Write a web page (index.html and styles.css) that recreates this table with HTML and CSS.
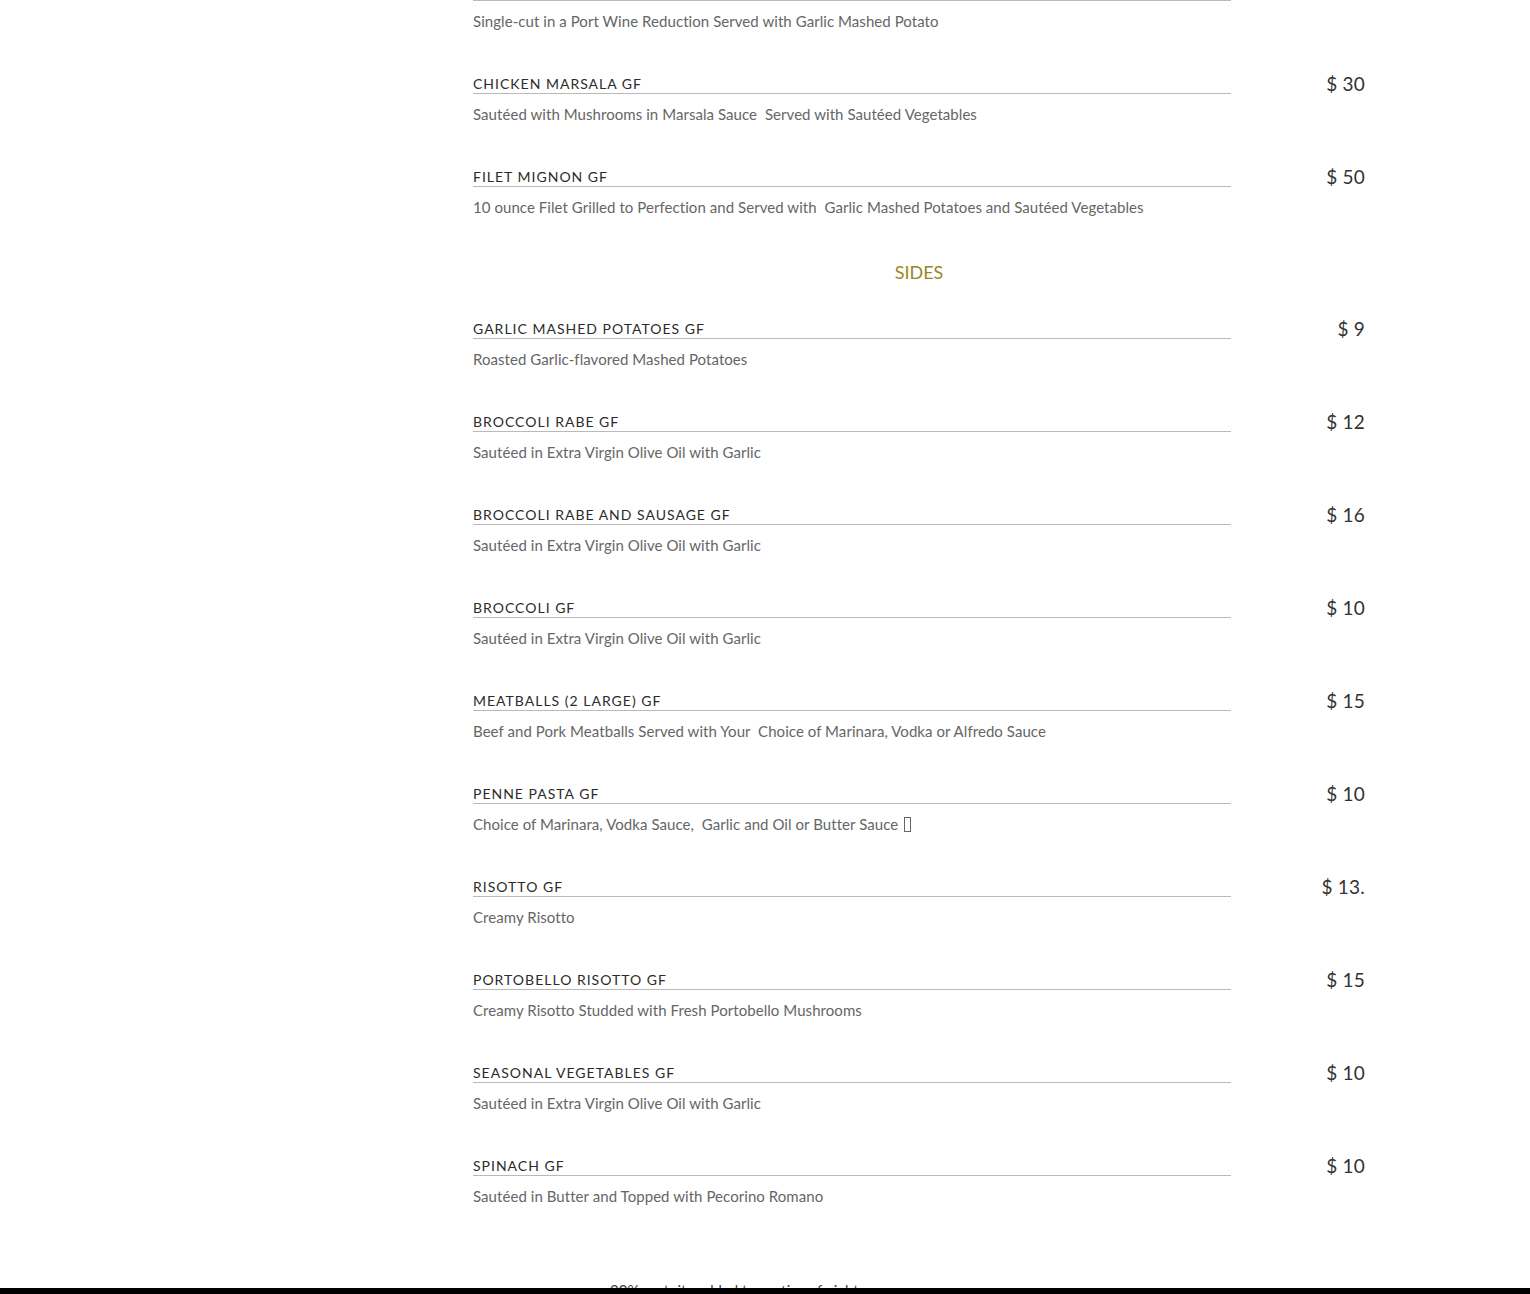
FILE: index.html
```html
<!DOCTYPE html>
<html lang="en">
<head>
<meta charset="utf-8">
<title>Menu</title>
<link rel="stylesheet" href="styles.css">
</head>
<body>
<main class="menu">
  <section class="item">
    <div class="item-head"><h3 class="item-title">VEAL CHOP GF</h3><span class="item-price">$ 45</span></div>
    <p class="item-desc">Single-cut in a Port Wine Reduction Served with Garlic Mashed Potato</p>
  </section>
  <section class="item">
    <div class="item-head"><h3 class="item-title">CHICKEN MARSALA GF</h3><span class="item-price">$ 30</span></div>
    <p class="item-desc">Sautéed with Mushrooms in Marsala Sauce&nbsp; Served with Sautéed Vegetables</p>
  </section>
  <section class="item">
    <div class="item-head"><h3 class="item-title">FILET MIGNON GF</h3><span class="item-price">$ 50</span></div>
    <p class="item-desc">10 ounce Filet Grilled to Perfection and Served with&nbsp; Garlic Mashed Potatoes and Sautéed Vegetables</p>
  </section>

  <h2 class="section-title">SIDES</h2>

  <section class="item">
    <div class="item-head"><h3 class="item-title">GARLIC MASHED POTATOES GF</h3><span class="item-price">$ 9</span></div>
    <p class="item-desc">Roasted Garlic-flavored Mashed Potatoes</p>
  </section>
  <section class="item">
    <div class="item-head"><h3 class="item-title">BROCCOLI RABE GF</h3><span class="item-price">$ 12</span></div>
    <p class="item-desc">Sautéed in Extra Virgin Olive Oil with Garlic</p>
  </section>
  <section class="item">
    <div class="item-head"><h3 class="item-title">BROCCOLI RABE AND SAUSAGE GF</h3><span class="item-price">$ 16</span></div>
    <p class="item-desc">Sautéed in Extra Virgin Olive Oil with Garlic</p>
  </section>
  <section class="item">
    <div class="item-head"><h3 class="item-title">BROCCOLI GF</h3><span class="item-price">$ 10</span></div>
    <p class="item-desc">Sautéed in Extra Virgin Olive Oil with Garlic</p>
  </section>
  <section class="item">
    <div class="item-head"><h3 class="item-title">MEATBALLS (2 LARGE) GF</h3><span class="item-price">$ 15</span></div>
    <p class="item-desc">Beef and Pork Meatballs Served with Your&nbsp; Choice of Marinara, Vodka or Alfredo Sauce</p>
  </section>
  <section class="item">
    <div class="item-head"><h3 class="item-title">PENNE PASTA GF</h3><span class="item-price">$ 10</span></div>
    <p class="item-desc">Choice of Marinara, Vodka Sauce,&nbsp; Garlic and Oil or Butter Sauce <span class="tofu"></span></p>
  </section>
  <section class="item">
    <div class="item-head"><h3 class="item-title">RISOTTO GF</h3><span class="item-price">$ 13.</span></div>
    <p class="item-desc">Creamy Risotto</p>
  </section>
  <section class="item">
    <div class="item-head"><h3 class="item-title">PORTOBELLO RISOTTO GF</h3><span class="item-price">$ 15</span></div>
    <p class="item-desc">Creamy Risotto Studded with Fresh Portobello Mushrooms</p>
  </section>
  <section class="item">
    <div class="item-head"><h3 class="item-title">SEASONAL VEGETABLES GF</h3><span class="item-price">$ 10</span></div>
    <p class="item-desc">Sautéed in Extra Virgin Olive Oil with Garlic</p>
  </section>
  <section class="item">
    <div class="item-head"><h3 class="item-title">SPINACH GF</h3><span class="item-price">$ 10</span></div>
    <p class="item-desc">Sautéed in Butter and Topped with Pecorino Romano</p>
  </section>

  <p class="note">20% gratuity added to parties of eight or more</p>
</main>
<div class="bottom-bar"></div>
</body>
</html>
```
FILE: styles.css
```css
html, body {
  margin: 0;
  padding: 0;
  background: #ffffff;
}

body {
  font-family: "Lato", "Noto Sans", sans-serif;
  color: #333333;
  overflow: hidden;
  height: 1294px;
}

.menu {
  width: 892px;
  margin: -19px 0 0 473px;
}

.item {
  margin-bottom: 42px;
}

.item-head {
  display: flex;
  justify-content: space-between;
  align-items: flex-start;
}

.item-title {
  width: 758px;
  margin: 0;
  font-size: 14px;
  font-weight: 400;
  letter-spacing: 1px;
  line-height: 19px;
  color: #2b2b2b;
  border-bottom: 1px solid #b9b9b9;
}

.item-price {
  font-size: 19px;
  line-height: 19px;
  color: #333333;
  letter-spacing: 0.2px;
}

.item-desc {
  margin: 9px 0 0;
  font-size: 15px;
  line-height: 22px;
  letter-spacing: 0.06px;
  color: #666666;
}

.tofu {
  display: inline-block;
  width: 5px;
  height: 13px;
  border: 1px solid #666666;
  vertical-align: -2px;
  margin-left: 2px;
}

.section-title {
  margin: 0 0 35px;
  text-align: center;
  font-size: 18px;
  font-weight: 400;
  line-height: 24px;
  color: #9a8628;
}

.note {
  margin: 72px 0 0 137px;
  font-size: 15px;
  line-height: 22px;
  color: #444444;
}

.bottom-bar {
  position: fixed;
  left: 0;
  right: 0;
  bottom: 0;
  height: 6px;
  background: #000000;
}
```
